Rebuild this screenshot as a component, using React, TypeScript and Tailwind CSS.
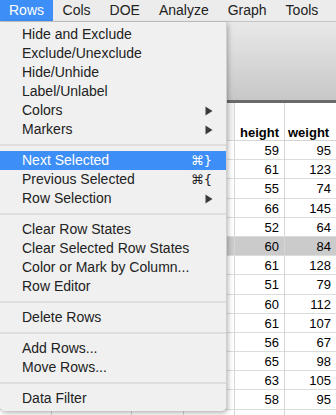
const menuBar = ['Rows', 'Cols', 'DOE', 'Analyze', 'Graph', 'Tools']

type Item =
  | { kind: 'item'; label: string; shortcut?: string; submenu?: boolean; active?: boolean }
  | { kind: 'sep' }

const menu: Item[] = [
  { kind: 'item', label: 'Hide and Exclude' },
  { kind: 'item', label: 'Exclude/Unexclude' },
  { kind: 'item', label: 'Hide/Unhide' },
  { kind: 'item', label: 'Label/Unlabel' },
  { kind: 'item', label: 'Colors', submenu: true },
  { kind: 'item', label: 'Markers', submenu: true },
  { kind: 'sep' },
  { kind: 'item', label: 'Next Selected', shortcut: '⌘}', active: true },
  { kind: 'item', label: 'Previous Selected', shortcut: '⌘{' },
  { kind: 'item', label: 'Row Selection', submenu: true },
  { kind: 'sep' },
  { kind: 'item', label: 'Clear Row States' },
  { kind: 'item', label: 'Clear Selected Row States' },
  { kind: 'item', label: 'Color or Mark by Column...' },
  { kind: 'item', label: 'Row Editor' },
  { kind: 'sep' },
  { kind: 'item', label: 'Delete Rows' },
  { kind: 'sep' },
  { kind: 'item', label: 'Add Rows...' },
  { kind: 'item', label: 'Move Rows...' },
  { kind: 'sep' },
  { kind: 'item', label: 'Data Filter' },
]

const rows = [
  [1, 'KATIE', 12, 'F', 59, 95],
  [2, 'LOUISE', 12, 'F', 61, 123],
  [3, 'JANE', 12, 'F', 55, 74],
  [4, 'JACLYN', 12, 'F', 66, 145],
  [5, 'LILLIE', 12, 'F', 52, 64],
  [6, 'TIM', 12, 'M', 60, 84],
  [7, 'JAMES', 12, 'M', 61, 128],
  [8, 'ROBERT', 12, 'M', 51, 79],
  [9, 'BARBARA', 13, 'F', 60, 112],
  [10, 'ALICE', 13, 'F', 61, 107],
  [11, 'SUSAN', 13, 'F', 56, 67],
  [12, 'JOHN', 13, 'M', 65, 98],
  [13, 'JOE', 13, 'M', 63, 105],
  [14, 'MICHAEL', 13, 'M', 58, 95],
  [15, 'DAVID', 13, 'M', 59, 79],
]

function Arrow() {
  return (
    <svg width="8" height="10" viewBox="0 0 8 10" className="mr-[-1px]">
      <path d="M0.5 0.5 L7.5 5 L0.5 9.5 Z" fill="#3a3a3a" />
    </svg>
  )
}

function Menu() {
  return (
    <div className="absolute left-0 top-[22px] w-[227px] pt-[3px] pb-[3px] bg-[#f0f0f0] rounded-b-[5px] shadow-[1px_2px_5px_rgba(0,0,0,0.3)] border-r border-[#cfcfcf]">
      {menu.map((it, i) =>
        it.kind === 'sep' ? (
          <div key={i} className="h-[12px] flex items-center">
            <div className="h-[2px] w-full bg-[#dedede]" />
          </div>
        ) : (
          <div
            key={i}
            className={
              it.active
                ? 'h-[19px] pl-[22px] pr-[14px] flex items-center justify-between bg-[#3d8ef6] text-white'
                : 'h-[19px] pl-[22px] pr-[14px] flex items-center justify-between text-[#222]'
            }
          >
            <span>{it.label}</span>
            {it.shortcut && <span className="font-['DejaVu_Sans',sans-serif] text-[13px]">{it.shortcut}</span>}
            {it.submenu && <Arrow />}
          </div>
        )
      )}
    </div>
  )
}

export default function App() {
  return (
    <div className="relative w-[336px] h-[415px] overflow-hidden bg-white text-[14px] font-['Liberation_Sans',Arial,sans-serif]">
      <div className="h-[22px] flex items-stretch bg-[#ececec] border-b border-[#c4c4c4]">
        {menuBar.map((m, i) => (
          <div
            key={m}
            className={
              i === 0
                ? 'px-[9px] flex items-center bg-[#3d8ef6] text-white'
                : 'px-[9.5px] flex items-center text-[#222]'
            }
          >
            {m}
          </div>
        ))}
      </div>

      <div className="h-[78px] bg-gradient-to-b from-[#e9e9e9] to-[#c7c7c7]" />
      <div className="h-[3px] bg-[#6a6a6a]" />

      <div className="text-[13px] text-black">
        <div className="grid grid-cols-[52px_80px_52px_51px_50px_51px] h-[38px] border-b border-[#d6d6d6] font-bold leading-none">
          <div className="bg-[#f2f2f2] border-r border-[#d6d6d6]" />
          <div className="border-r border-[#d6d6d6] flex items-end pb-[1px] pl-[4px]">name</div>
          <div className="border-r border-[#d6d6d6] flex items-end pb-[1px] pl-[4px]">age</div>
          <div className="bg-[#f2f2f2] border-r border-[#d6d6d6] flex items-end pb-[1px] pl-[4px]">sex</div>
          <div className="border-r border-[#d6d6d6] flex items-end pb-[1px] pl-[5px]">height</div>
          <div className="flex items-end pb-[1px] pl-[3px]">weight</div>
        </div>
        {rows.map((r, i) => {
          const sel = r[0] === 6
          return (
            <div
              key={i}
              className={
                sel
                  ? 'grid grid-cols-[52px_80px_52px_51px_50px_51px] h-[19.2px] border-b border-[#dcdcdc] bg-[#cbcbcb]'
                  : 'grid grid-cols-[52px_80px_52px_51px_50px_51px] h-[19.2px] border-b border-[#dcdcdc]'
              }
            >
              <div className="border-r border-[#d6d6d6] flex items-center justify-end pr-[4px]">{r[0]}</div>
              <div className="border-r border-[#d6d6d6] flex items-center pl-[5px]">{r[1]}</div>
              <div className="border-r border-[#d6d6d6] flex items-center justify-end pr-[3px]">{r[2]}</div>
              <div className="border-r border-[#d6d6d6] flex items-center pl-[4px]">{r[3]}</div>
              <div className="border-r border-[#d6d6d6] flex items-center justify-end pr-[5px]">{r[4]}</div>
              <div className="flex items-center justify-end pr-[5px]">{r[5]}</div>
            </div>
          )
        })}
      </div>

      <Menu />
    </div>
  )
}
